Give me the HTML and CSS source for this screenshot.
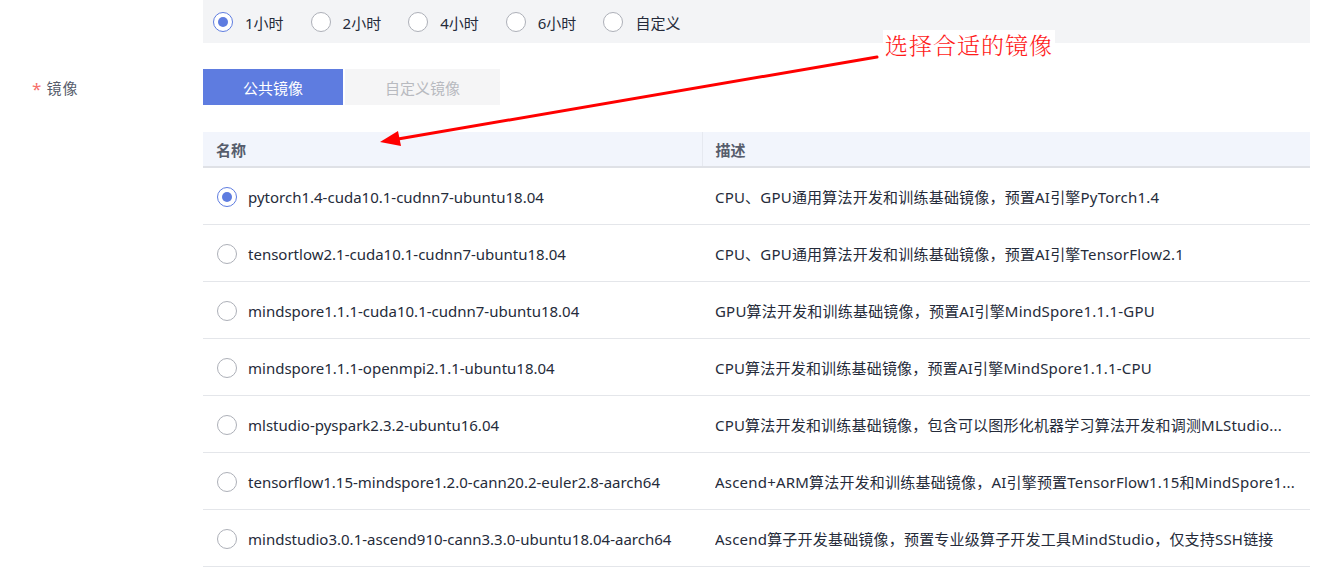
FILE: index.html
```html
<!DOCTYPE html>
<html lang="zh-CN">
<head>
<meta charset="utf-8">
<title>镜像选择</title>
<link rel="stylesheet" href="styles.css">
</head>
<body>
<div class="page">
  <div class="form-row">
    <div class="form-label"></div>
    <div class="duration-bar">
      <label class="opt"><span class="radio checked"></span><span>1小时</span></label>
      <label class="opt"><span class="radio"></span><span>2小时</span></label>
      <label class="opt"><span class="radio"></span><span>4小时</span></label>
      <label class="opt"><span class="radio"></span><span>6小时</span></label>
      <label class="opt"><span class="radio"></span><span>自定义</span></label>
    </div>
  </div>

  <div class="form-row image-row">
    <div class="form-label label-line"><span class="req">*</span>镜像</div>
    <div class="form-body">
      <div class="tabs">
        <button class="tab active">公共镜像</button>
        <button class="tab">自定义镜像</button>
      </div>
      <table class="grid">
        <thead>
          <tr><th class="col-name">名称</th><th class="col-desc">描述</th></tr>
        </thead>
        <tbody>
          <tr><td><div class="cell-name"><span class="radio checked"></span>pytorch1.4-cuda10.1-cudnn7-ubuntu18.04</div></td><td><div class="desc">CPU、GPU通用算法开发和训练基础镜像，预置AI引擎PyTorch1.4</div></td></tr>
          <tr><td><div class="cell-name"><span class="radio"></span>tensortlow2.1-cuda10.1-cudnn7-ubuntu18.04</div></td><td><div class="desc">CPU、GPU通用算法开发和训练基础镜像，预置AI引擎TensorFlow2.1</div></td></tr>
          <tr><td><div class="cell-name"><span class="radio"></span>mindspore1.1.1-cuda10.1-cudnn7-ubuntu18.04</div></td><td><div class="desc">GPU算法开发和训练基础镜像，预置AI引擎MindSpore1.1.1-GPU</div></td></tr>
          <tr><td><div class="cell-name"><span class="radio"></span>mindspore1.1.1-openmpi2.1.1-ubuntu18.04</div></td><td><div class="desc">CPU算法开发和训练基础镜像，预置AI引擎MindSpore1.1.1-CPU</div></td></tr>
          <tr><td><div class="cell-name"><span class="radio"></span>mlstudio-pyspark2.3.2-ubuntu16.04</div></td><td><div class="desc">CPU算法开发和训练基础镜像，包含可以图形化机器学习算法开发和调测MLStudio...</div></td></tr>
          <tr><td><div class="cell-name"><span class="radio"></span>tensorflow1.15-mindspore1.2.0-cann20.2-euler2.8-aarch64</div></td><td><div class="desc">Ascend+ARM算法开发和训练基础镜像，AI引擎预置TensorFlow1.15和MindSpore1...</div></td></tr>
          <tr><td><div class="cell-name"><span class="radio"></span>mindstudio3.0.1-ascend910-cann3.3.0-ubuntu18.04-aarch64</div></td><td><div class="desc">Ascend算子开发基础镜像，预置专业级算子开发工具MindStudio，仅支持SSH链接</div></td></tr>
        </tbody>
      </table>
    </div>
  </div>

  <svg class="callout-arrow" width="1332" height="567" viewBox="0 0 1332 567">
    <line x1="877" y1="57" x2="398" y2="139" stroke="#ff0000" stroke-width="3" stroke-linecap="round"/>
    <polygon points="380,142 401,146 398,131" fill="#ff0000"/>
  </svg>
  <div class="callout-text">选择合适的镜像</div>
</div>
</body>
</html>
```

FILE: styles.css
```css
* { box-sizing: border-box; }

html, body {
  margin: 0;
  background: #ffffff;
}

body {
  font-family: "Noto Sans", "Noto Sans CJK SC", sans-serif;
  font-size: 15px;
  color: #252b3a;
}

.page {
  position: relative;
  width: 1332px;
  height: 567px;
  overflow: hidden;
}

.form-row {
  display: flex;
}

.form-label {
  width: 203px;
  flex: none;
}

/* duration selector */
.duration-bar {
  width: 1107px;
  height: 43px;
  background: #f3f4f6;
  display: flex;
  align-items: center;
  padding: 1px 0 0 10px;
  gap: 27px;
}

.opt {
  display: flex;
  align-items: center;
  gap: 12px;
  color: #252b3a;
}

.radio {
  width: 20px;
  height: 20px;
  flex: none;
  border: 1px solid #adb0b8;
  border-radius: 50%;
  background: #ffffff;
  display: inline-flex;
  align-items: center;
  justify-content: center;
}

.radio.checked {
  border-color: #5e7ce0;
}

.radio.checked::after {
  content: "";
  width: 10px;
  height: 10px;
  border-radius: 50%;
  background: #5e7ce0;
}

/* image selector */
.image-row {
  margin-top: 26px;
}

.label-line {
  height: 36px;
  display: flex;
  align-items: center;
  padding-left: 32px;
  color: #575d6c;
  letter-spacing: 1px;
}

.req {
  color: #f66f6a;
  font-size: 17px;
  margin-right: 4px;
  position: relative;
  top: 1px;
}

.form-body {
  width: 1107px;
}

.tabs {
  display: flex;
  gap: 2px;
}

.tab {
  height: 36px;
  border: none;
  margin: 0;
  font-family: inherit;
  font-size: 15px;
  background: #f5f5f6;
  color: #b8bac0;
  padding: 0;
}

.tab:first-child { width: 140px; }
.tab:last-child { width: 155px; }

.tab.active {
  background: #5e7ce0;
  color: #ffffff;
}

.grid {
  margin-top: 27px;
  width: 100%;
  border-collapse: collapse;
  table-layout: fixed;
}

.grid th {
  height: 35px;
  background: #f2f5fc;
  border-bottom: 2px solid #dfe1e6;
  text-align: left;
  font-weight: 700;
  color: #575d6c;
  padding: 0 0 0 13px;
}

.grid th.col-name { width: 499px; }

.grid th.col-desc {
  border-left: 1px solid #e6e9f0;
}

.grid td {
  height: 57px;
  border-bottom: 1px solid #e4e6ea;
  padding: 0 12px 0 13px;
  vertical-align: middle;
}

.grid td:first-child {
  padding-left: 14px;
}

.cell-name {
  display: flex;
  align-items: center;
  gap: 11px;
  white-space: nowrap;
  color: #252b3a;
  padding-top: 2px;
}

.desc {
  white-space: nowrap;
  overflow: hidden;
  color: #252b3a;
  padding-top: 1px;
  letter-spacing: 0.2px;
}

/* annotation drawn over the form */
.callout-arrow {
  position: absolute;
  left: 0;
  top: 0;
  pointer-events: none;
}

.callout-text {
  position: absolute;
  left: 883px;
  top: 30px;
  height: 30px;
  line-height: 30px;
  padding: 0 2px;
  background: #ffffff;
  color: #ff1a1a;
  font-family: "Noto Serif CJK SC", serif;
  font-size: 23px;
  font-weight: 300;
  letter-spacing: 1px;
}
```
